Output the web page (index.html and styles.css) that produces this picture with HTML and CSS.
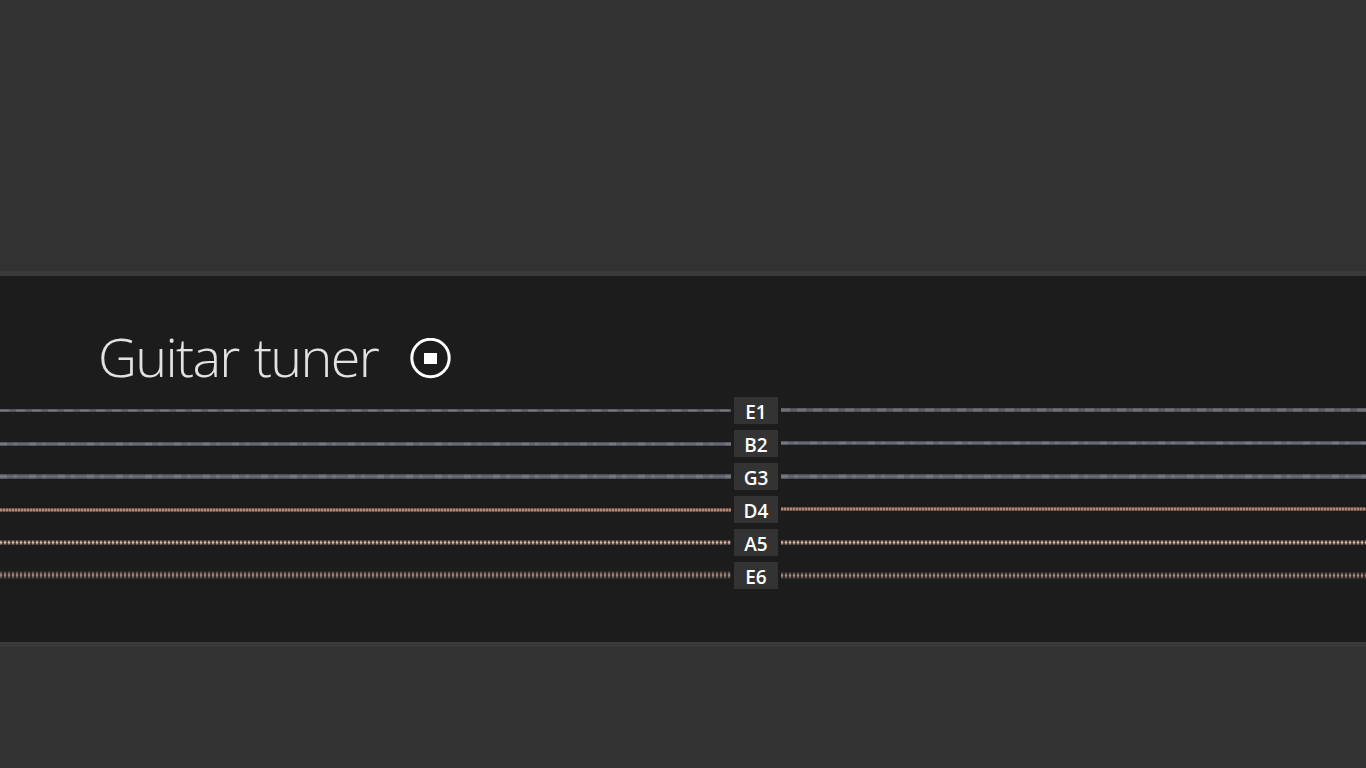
FILE: index.html
```html
<!DOCTYPE html>
<html lang="en">
<head>
<meta charset="utf-8">
<title>Guitar tuner</title>
<link rel="stylesheet" href="styles.css">
</head>
<body>
<div class="top"></div>
<main class="panel">
  <div class="head">
    <h1 class="title">Guitar tuner</h1>
    <svg class="stop" width="42" height="42" viewBox="0 0 42 42" aria-label="Stop">
      <circle cx="20.5" cy="20" r="18.7" fill="none" stroke="#fff" stroke-width="3"/>
      <rect x="14" y="15" width="13" height="11" fill="#fff"/>
    </svg>
  </div>
  <div class="strings">
    <div class="string"><span class="line plain s1 l1"></span><span class="note">E1</span><span class="line plain s1 r1"></span></div>
    <div class="string"><span class="line plain s2 l2"></span><span class="note">B2</span><span class="line plain s2 r2"></span></div>
    <div class="string"><span class="line plain s3 l3"></span><span class="note">G3</span><span class="line plain s3 r3"></span></div>
    <div class="string"><span class="line s4 l4"></span><span class="note">D4</span><span class="line s4 r4"></span></div>
    <div class="string"><span class="line s5 l5"></span><span class="note">A5</span><span class="line s5 r5"></span></div>
    <div class="string"><span class="line s6 l6"></span><span class="note">E6</span><span class="line s6 r6"></span></div>
  </div>
</main>
<div class="bottom"></div>
</body>
</html>
```
FILE: styles.css
```css
html, body { margin: 0; padding: 0; height: 100%; overflow: hidden; }
body { display: flex; flex-direction: column; height: 768px; background: #323232; font-family: "Open Sans", "Liberation Sans", sans-serif; }
.top { height: 271px; background: #323232; }
.bottom { flex: 1; background: #323232; }
.panel { height: 366px; background: #1c1c1c; border-top: 5px solid #3a3a3a; border-bottom: 5px solid #3a3a3a; display: flex; flex-direction: column; }
.head { display: flex; align-items: flex-start; height: 121px; padding-left: 98px; box-sizing: border-box; }
.title { margin: 44px 0 0; font-size: 54px; font-weight: 300; letter-spacing: -1.7px; word-spacing: 3px; color: #e2e2e2; line-height: 72px; }
.stop { margin: 62px 0 0 32px; }
.strings { display: flex; flex-direction: column; gap: 6px; }
.string { display: grid; grid-template-columns: 731px 44px 585px; column-gap: 3px; align-items: start; height: 27px; }
.note { display: flex; align-items: center; justify-content: center; box-sizing: border-box; height: 27px; padding-top: 2px; background: #333; color: #fff; font-size: 19px; font-weight: 600; }
.line { display: block; }
.l1 { margin-top: 12px; height: 3px; }
.r1 { margin-top: 11px; height: 4px; }
.l2 { margin-top: 12px; height: 4px; }
.r2 { margin-top: 11px; height: 4px; }
.l3, .r3 { margin-top: 11px; height: 5px; }
.l4 { margin-top: 12px; height: 4px; }
.r4 { margin-top: 11px; height: 4px; }
.l5, .r5 { margin-top: 11px; height: 5px; }
.l6 { margin-top: 9px; height: 8px; }
.r6 { margin-top: 10px; height: 7px; }
.plain { background:
  linear-gradient(#1c1c1c88, #1c1c1c00 40%, #1c1c1c00 60%, #1c1c1c88),
  repeating-linear-gradient(90deg, #ffffff12 0 7px, #00000014 7px 13px, #ffffff0a 13px 17px, #0000000e 17px 29px),
  #6f717f; }
.s1 { background:
  linear-gradient(#1c1c1c66, #1c1c1c00 50%, #1c1c1c66),
  repeating-linear-gradient(90deg, #ffffff14 0 9px, #00000018 9px 16px),
  #6e6e76; }
.s4 { background:
  linear-gradient(#1c1c1caa, #1c1c1c00 50%, #1c1c1caa),
  repeating-linear-gradient(90deg, #cf9a85 0 2px, #8a6454 2px 3px); }
.s5 { background:
  linear-gradient(#1c1c1cd0, #1c1c1c00 50%, #1c1c1cd0),
  repeating-linear-gradient(90deg, #e2bfb0 0 2px, #6d4e44 2px 4px); }
.s6 { background:
  linear-gradient(#1c1c1cee, #1c1c1c44 35%, #1c1c1c00 50%, #1c1c1c44 65%, #1c1c1cee),
  repeating-linear-gradient(90deg, #a89086 0 2px, #40332f 2px 4px); }
```
